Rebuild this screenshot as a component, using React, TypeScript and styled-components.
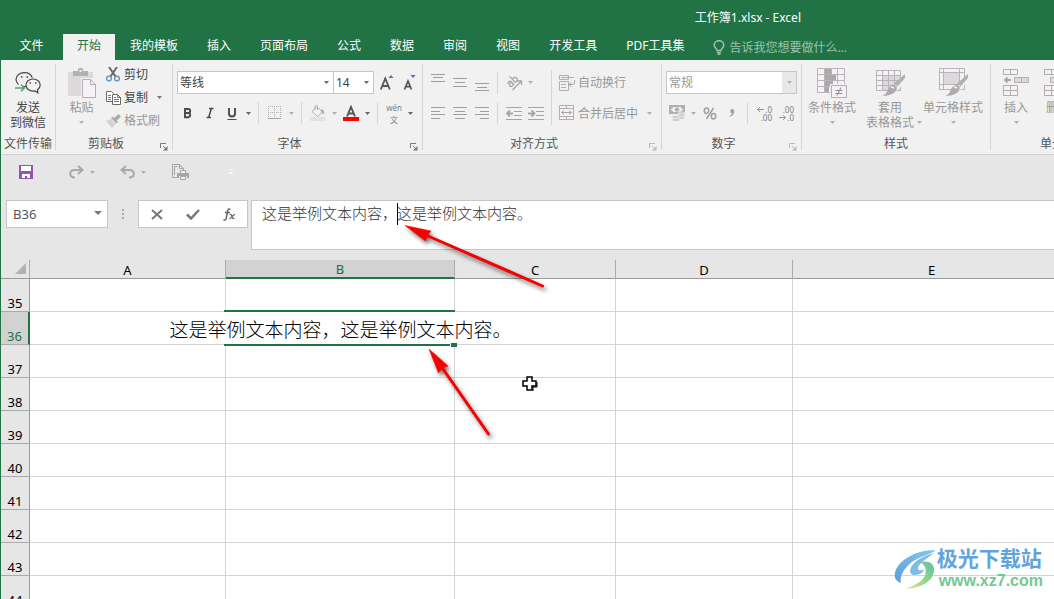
import React from "react";
import styled, { createGlobalStyle, css } from "styled-components";

const green = "#217346";
const dim = "#b1b1b1";
const pale = "#f5f1f5";
const mauve = "#b3adb3";
const shade = "#dcd8dc";
const offText = "#989898";

const GlobalStyle = createGlobalStyle`
  * { box-sizing: border-box; }
  body {
    margin: 0;
    font: 12px/15px "Noto Sans", "Noto Sans CJK SC", sans-serif;
    color: #444;
    background: #e6e6e6;
  }
  button, input, select, textarea {
    font: inherit;
    color: inherit;
    margin: 0;
    padding: 0;
    border: 0;
    background: none;
    outline: none;
  }
  svg { display: block; flex: none; }
`;

const Window = styled.div`
  position: relative;
  display: flex;
  flex-direction: column;
  height: 100vh;
  overflow: hidden;
  border-left: 1px solid ${green};
  background: #e6e6e6;
`;

const TitleBar = styled.header`
  display: flex;
  justify-content: flex-end;
  align-items: center;
  height: 34px;
  flex: none;
  padding-right: 253px;
  background: ${green};
  color: #fff;
  white-space: nowrap;
`;

const TabBar = styled.nav`
  display: flex;
  gap: 1px;
  height: 26px;
  flex: none;
  background: ${green};
`;

const Tab = styled.button<{ $active?: boolean; $wide?: boolean }>`
  flex: none;
  width: ${(p) => (p.$wide ? "61px" : "auto")};
  padding: 0 14px 3px;
  color: ${(p) => (p.$active ? green : "#fff")};
  background: ${(p) => (p.$active ? "#f1f1f1" : "transparent")};
  white-space: nowrap;
`;

const TellMe = styled.label`
  display: flex;
  align-items: center;
  gap: 4px;
  flex: 1;
  padding-left: 14px;
  color: #9cc4ac;
  input { flex: 1; min-width: 0; height: 20px; }
  input::placeholder { color: #9cc4ac; opacity: 1; }
`;

const Ribbon = styled.section`
  display: flex;
  flex: none;
  height: 95px;
  padding: 4px 0;
  overflow: hidden;
  background: #f1f1f1;
  border-bottom: 1px solid #d2d2d2;
`;

const GroupBox = styled.div<{ $w: number }>`
  display: flex;
  flex-direction: column;
  flex: none;
  width: ${(p) => p.$w}px;
  height: 86px;
  border-right: 1px solid #d5d5d5;
`;

const GroupBody = styled.div<{ $pad?: number }>`
  display: flex;
  height: 71px;
  flex: none;
  padding-left: ${(p) => p.$pad ?? 4}px;
`;

const GroupFoot = styled.div`
  display: flex;
  align-items: flex-start;
  padding-top: 1px;
  color: #555;
  span { flex: 1; text-align: center; white-space: nowrap; }
`;

const Launcher = styled.button`
  display: flex;
  width: 16px;
  padding: 7px 4px 0 4px;
`;

const Big = styled.button<{ $w: number; $off?: boolean }>`
  display: flex;
  flex-direction: column;
  align-items: center;
  flex: none;
  width: ${(p) => p.$w}px;
  padding-top: 4px;
  color: ${(p) => (p.$off ? offText : "#444")};
  white-space: nowrap;
`;

const BigIcon = styled.span`
  display: flex;
  align-items: center;
  justify-content: center;
  height: 32px;
  padding-bottom: 2px;
`;

const BigLine = styled.span`
  position: relative;
  display: flex;
  align-items: center;
  justify-content: center;
  height: 15px;
`;

const SideCaret = styled.span`
  position: absolute;
  left: 100%;
  padding-left: 3px;
`;

const Stack = styled.div<{ $tight?: boolean }>`
  display: flex;
  flex-direction: column;
  gap: ${(p) => (p.$tight ? 2 : 8)}px;
  padding-top: ${(p) => (p.$tight ? 0 : 7)}px;
`;

const Row = styled.div<{ $h?: number }>`
  display: flex;
  align-items: center;
  height: ${(p) => p.$h ?? 22}px;
`;

const Tool = styled.button`
  display: flex;
  align-items: center;
  justify-content: center;
  flex: none;
  width: 22px;
  height: 22px;
`;

const CaretTool = styled(Tool)`
  width: 11px;
`;

const TextTool = styled.button<{ $off?: boolean; $w?: number }>`
  display: flex;
  align-items: center;
  gap: 3px;
  width: ${(p) => (p.$w ? p.$w + "px" : "auto")};
  height: 21px;
  padding-left: 3px;
  color: ${(p) => (p.$off ? offText : "#444")};
  white-space: nowrap;
`;

const Rule = styled.span<{ $tall?: boolean }>`
  flex: none;
  width: 1px;
  height: ${(p) => (p.$tall ? "55px" : "22px")};
  margin: ${(p) => (p.$tall ? "6px 4px 0" : "0 5px 0 4px")};
  background: #d5d5d5;
`;

const Combo = styled.label<{ $w: number; $off?: boolean; $join?: boolean }>`
  position: relative;
  flex: none;
  width: ${(p) => p.$w}px;
  height: 23px;
  border: 1px solid #c6c6c6;
  background: #fff;
  color: ${(p) => (p.$off ? "#999" : "#444")};
  ${(p) => p.$join && css`border-right: 0;`}
  select {
    width: 100%;
    height: 21px;
    padding-left: 2px;
    appearance: none;
    opacity: 1;
  }
`;

const ComboArrow = styled.span<{ $off?: boolean }>`
  position: absolute;
  top: 0;
  right: 0;
  display: flex;
  align-items: center;
  justify-content: center;
  width: 14px;
  height: 21px;
  pointer-events: none;
  background: ${(p) => (p.$off ? "#e8e8e8" : "transparent")};
`;

const QuickBar = styled.div`
  display: flex;
  align-items: center;
  flex: none;
  height: 34px;
  padding-left: 14px;
`;

const QuickGap = styled.span<{ $w: number }>`
  width: ${(p) => p.$w}px;
`;

const FormulaRow = styled.div`
  display: flex;
  align-items: flex-start;
  flex: none;
  padding: 11px 0 10px 5px;
`;

const NameBox = styled.div`
  position: relative;
  width: 102px;
  height: 28px;
  border: 1px solid #c6c6c6;
  background: #fff;
  font-size: 13px;
  input { width: 80px; height: 26px; padding-left: 6px; color: #555; }
  button { position: absolute; top: 8px; right: 5px; }
`;

const Grip = styled.span`
  display: flex;
  align-items: center;
  justify-content: center;
  width: 30px;
  height: 28px;
`;

const EntryButtons = styled.div`
  display: flex;
  width: 110px;
  height: 28px;
  margin-right: 3px;
  border: 1px solid #c6c6c6;
  background: #fff;
  button { display: flex; align-items: center; justify-content: center; width: 36px; }
`;

const FormulaBox = styled.div`
  position: relative;
  flex: 1;
  height: 50px;
  border: 1px solid #c6c6c6;
  border-right: 0;
  background: #fff;
  textarea {
    display: block;
    width: 100%;
    height: 48px;
    padding: 1px 10px;
    resize: none;
    font-family: "Noto Sans CJK SC", sans-serif;
    font-size: 15px;
    line-height: 22px;
    font-weight: 300;
    color: #333;
  }
`;

const TextCaret = styled.span`
  position: absolute;
  left: 145px;
  top: 2px;
  width: 1px;
  height: 22px;
  background: #000;
`;

const SheetArea = styled.main`
  flex: 1;
  min-height: 0;
  overflow: hidden;
`;

const Sheet = styled.table`
  width: calc(100% + 17px);
  table-layout: fixed;
  border-collapse: separate;
  border-spacing: 0;
  background: #fff;
  font-size: 13px;
  color: #000;
`;

const ColHead = styled.th<{ $on?: boolean }>`
  height: 19px;
  padding: 2px 0 0;
  line-height: 15px;
  font-weight: 400;
  color: ${(p) => (p.$on ? green : "#000")};
  background: ${(p) => (p.$on ? "#d2d2d2" : "#e6e6e6")};
  border-right: 1px solid #ababab;
  border-bottom: ${(p) => (p.$on ? `2px solid ${green}` : "1px solid #9b9b9b")};
`;

const Corner = styled(ColHead)`
  padding: 0 3px 2px 0;
  svg { margin-left: auto; }
`;

const RowHead = styled.th<{ $on?: boolean }>`
  height: 33px;
  padding: 0;
  vertical-align: bottom;
  font-weight: 400;
  line-height: 15px;
  color: ${(p) => (p.$on ? green : "#000")};
  background: ${(p) => (p.$on ? "#d2d2d2" : "#e6e6e6")};
  border-right: ${(p) => (p.$on ? `2px solid ${green}` : "1px solid #9b9b9b")};
  border-bottom: 1px solid #ababab;
`;

const Cell = styled.td<{ $open?: boolean; $active?: boolean }>`
  position: relative;
  z-index: ${(p) => (p.$active ? 1 : 0)};
  height: 33px;
  padding: 0;
  border-bottom: 1px solid #d4d4d4;
  border-right: ${(p) => (p.$open ? "0" : "1px solid #d4d4d4")};
`;

const CellText = styled.div`
  position: relative;
  display: flex;
  justify-content: center;
  height: 32px;
  font-family: "Noto Sans CJK SC", sans-serif;
  font-size: 19px;
  line-height: 34px;
  font-weight: 300;
  white-space: nowrap;
`;

const Selection = styled.span`
  position: absolute;
  inset: -2px 0 -2px -2px;
  border: solid ${green};
  border-width: 2px 0;
  &::after {
    content: "";
    position: absolute;
    right: -2px;
    bottom: -3px;
    width: 6px;
    height: 4px;
    background: ${green};
    border-left: 1px solid #fff;
  }
`;

const Overlay = styled.svg`
  position: absolute;
  left: 399px;
  top: 220px;
  z-index: 2;
  pointer-events: none;
`;

const Watermark = styled.div`
  position: absolute;
  right: 11px;
  bottom: 8px;
  z-index: 2;
  display: flex;
  align-items: center;
`;

const MarkText = styled.div`
  display: flex;
  flex-direction: column;
  font-family: "Liberation Sans", "Noto Sans CJK SC", sans-serif;
  white-space: nowrap;
`;

const MarkName = styled.span`
  font-size: 21px;
  line-height: 24px;
  font-weight: 700;
  color: #62a3de;
`;

const MarkUrl = styled.span`
  padding-left: 2px;
  font-size: 16px;
  line-height: 20px;
  font-weight: 700;
  color: #72c991;
`;

const Caret = ({ color = dim }: { color?: string }) => (
  <svg width="5" height="3" viewBox="0 0 5 3"><path d="M0 0h5L2.5 3z" fill={color} /></svg>
);

function Group({ label, w, pad, launcher, children }: {
  label: string; w: number; pad?: number; launcher?: string; children: React.ReactNode;
}) {
  return (
    <GroupBox $w={w} role="group" aria-label={label}>
      <GroupBody $pad={pad}>{children}</GroupBody>
      <GroupFoot>
        <span>{label}</span>
        {launcher && (
          <Launcher aria-label={label + "设置"}>
            <svg width="8" height="8" viewBox="0 0 8 8" stroke={launcher} fill="none">
              <path d="M.5 5V.5H6M3 3l3 3" />
              <path d="M7.500 3v4.500H3z" fill={launcher} stroke="none" />
            </svg>
          </Launcher>
        )}
      </GroupFoot>
    </GroupBox>
  );
}

const WeChatIcon = () => (
  <svg width="26" height="24" viewBox="0 0 26 24" fill="none" stroke="#4a4a4a" strokeWidth="1.200">
    <path d="M11 15.500c-1 .1-2.200 0-3-.3M3.500 13.500C1.800 12 1 10.300 1 8.500 1 4.600 4.800 1.600 9.300 1.600c4 0 7.200 2.200 8 5.200" />
    <path d="M18 8c4.200 0 7.200 2.700 7.200 6 0 2-1 3.600-2.700 4.700l.4 3-2.900-1.800c-.6.2-1.300.2-2 .2-4 0-7-2.700-7-6.100S14 8 18 8z" />
    <path d="M6 6h1.600M11.500 6h1.600M14.500 12h1.500M20 12h1.500" strokeWidth="1.700" />
    <path d="M0 17h9M6 13.700L9.400 17 6 20.300" stroke="#4ea56b" strokeWidth="1.400" />
  </svg>
);

const PasteIcon = () => (
  <svg width="30" height="30" viewBox="0 0 30 30">
    <path d="M1 4h25v24H1z" fill={shade} />
    <path d="M6 8V3h5V1.500A1.500 1.500 0 0 1 12.500 0h2A1.500 1.500 0 0 1 16 1.500V3h5v5z" fill={dim} />
    <path d="M12.500 2h2v2h-2z" fill="#f1f1f1" />
    <path d="M14 10h11l5 5.500V30H14z" fill="#f1f1f1" />
    <path d="M15.500 11.500h8l5 5v13h-13z" fill={pale} stroke={mauve} />
    <path d="M23.500 11.500v5h5" fill="none" stroke={mauve} />
  </svg>
);

const CutIcon = () => (
  <svg width="15" height="15" viewBox="0 0 15 15" fill="none">
    <path d="M3 0l6.500 9.500M11 0L4.500 9.500" stroke="#6a6a6a" strokeWidth="2" />
    <circle cx="3" cy="11.500" r="2.400" stroke="#5d8fc4" strokeWidth="1.300" />
    <circle cx="11" cy="11.500" r="2.400" stroke="#5d8fc4" strokeWidth="1.300" />
  </svg>
);

const CopyIcon = () => (
  <svg width="15" height="14" viewBox="0 0 15 14" fill="#fff" stroke="#6a6a6a">
    <path d="M.5.500h5l2 2v8h-7z" />
    <path d="M2 4.500h3M2 6.500h3M2 8.500h3" stroke="#4a80b8" />
    <path d="M6.500 3.500h5l3 3v7h-8z" />
    <path d="M11.500 3.500v3h3" fill="none" />
    <path d="M8 6.500h2M8 8.500h5M8 10.500h5" stroke="#4a80b8" />
  </svg>
);

const BrushIcon = () => (
  <svg width="15" height="14" viewBox="0 0 15 14">
    <path d="M0 7l5-2 5 5-4 4z" fill="#d5d1d5" />
    <path d="M5 4l1.500-1.500L12 8l-1.500 1.500zM8 4l4.500-4L15 2.500 10.500 7z" fill="#ababab" />
  </svg>
);

const GrowFont = ({ small }: { small?: boolean }) => (
  <svg width="16" height="18" viewBox="0 0 16 18">
    {small ? (
      <path d="M2.500 15.500L6 7l3.500 8.500M4 12.700h4" fill="none" stroke="#555" strokeWidth="1.700" />
    ) : (
      <path d="M.8 15.500L5.300 4.500l4.500 11M2.500 12h5.600" fill="none" stroke="#555" strokeWidth="1.800" />
    )}
    <path d={small ? "M8.500 1h5L11 4z" : "M8.500 4h5L11 1z"} fill="#3f78b5" />
  </svg>
);

const Letter = ({ kind }: { kind: "B" | "I" | "U" }) => (
  <svg width="12" height="13" viewBox="0 0 12 13" fill="none" stroke="#4a4a4a">
    {kind === "B" && <path d="M3 2h3.200a2 2 0 0 1 0 4H3zM3 6h3.700a2.200 2.200 0 0 1 0 4.200H3z" strokeWidth="1.900" />}
    {kind === "I" && <path d="M5 1.500h4.500M2.500 10.500H7M7.300 1.500L4.700 10.500" strokeWidth="1.500" />}
    {kind === "U" && <><path d="M3 1v5.500a3 3 0 0 0 6 0V1" strokeWidth="1.900" /><path d="M1.500 12.500h9" /></>}
  </svg>
);

const BordersIcon = () => (
  <svg width="14" height="14" viewBox="0 0 14 14" fill="none" stroke={mauve} strokeDasharray="1 1">
    <path d="M0 .5h13M0 6.500h13M.5 0v12M6.500 0v12M12.500 0v12" />
    <path d="M0 12.500h13" stroke="#a5a5a5" strokeDasharray="none" />
  </svg>
);

const FillIcon = () => (
  <svg width="16" height="16" viewBox="0 0 16 16" fill="none" stroke={mauve}>
    <path d="M2 6.500L7 1.800l5.500 5L7.500 11.500z" fill={pale} />
    <path d="M5 5V1.500a1 1 0 0 1 2.500 0V5" />
    <path d="M11 4.500c3 0 3.500 2 3 5-2-.5-1.500-2-3-2.500z" fill={dim} stroke="none" />
    <path d="M0 12h16v4H0z" fill="#e6e0e6" stroke="none" />
  </svg>
);

const FontColor = () => (
  <svg width="16" height="16" viewBox="0 0 16 16">
    <path d="M4 11.500L8 2l4 9.500M5.300 8.500h5.400" fill="none" stroke="#555" strokeWidth="1.900" />
    <path d="M0 12h16v4H0z" fill="#f00" />
  </svg>
);

const Phonetic = styled.span`
  display: flex;
  flex-direction: column;
  align-items: center;
  gap: 1px;
  font-size: 8px;
  line-height: 11px;
  color: #808080;
`;

const Lines = ({ rows, h = 12 }: { rows: [number, number, number][]; h?: number }) => (
  <svg width="14" height={h} viewBox={`0 0 14 ${h}`} stroke="#9f9f9f">
    {rows.map(([x, w, y]) => <path key={y} d={`M${x} ${y}.5h${w}`} />)}
  </svg>
);

const Orient = () => (
  <svg width="17" height="16" viewBox="0 0 17 16" fill="none" stroke="#a5a5a5" strokeWidth="1.300">
    <g transform="rotate(-45 6 6)">
      <path d="M1 4.500h2.500q1.500 0 1.500 1.500v3.500H2.500a1.500 1.500 0 0 1 0-3H5" />
      <path d="M7.500 1v8.500M7.500 5h2a1.700 1.700 0 0 1 1.700 1.700v1.100A1.700 1.700 0 0 1 9.500 9.500h-2" />
    </g>
    <path d="M6.500 15L15 6.500M11.500 6h4v4" />
  </svg>
);

const Indent = ({ right }: { right?: boolean }) => (
  <svg width="16" height="13" viewBox="0 0 16 13" stroke="#a5a5a5" fill="none">
    <path d="M0 .5h16M8 4.500h8M8 8.500h8M0 12.500h16" />
    <path d={right ? "M0 6.500h6M3.500 3.500l3 3-3 3" : "M7 6.500H1M4 3.500l-3 3 3 3"} strokeWidth="1.800" />
  </svg>
);

const WrapIcon = () => (
  <svg width="16" height="16" viewBox="0 0 16 16" fill="none" stroke={mauve}>
    <path d="M.5.500h9v4h-9zM.5 6.500h9v9h-9zM2 2.500h13M2 9.500h5M2 12.500h5" />
    <path d="M15.500 5v2.500q0 2-2 2H10M12.500 7L10 9.500l2.500 2.500" stroke="#a5a5a5" />
  </svg>
);

const MergeIcon = () => (
  <svg width="16" height="16" viewBox="0 0 16 16" fill={pale} stroke={mauve}>
    <path d="M.5.500h14v14H.5zM.5 3.500h14M.5 11.500h14M7.500.500v3M7.500 11.500v3" />
    <path d="M2.500 7.500h10M5 5.500l-2.500 2 2.500 2M10 5.500l2.500 2-2.500 2" fill="none" stroke="#a5a5a5" />
  </svg>
);

const MoneyIcon = () => (
  <svg width="17" height="16" viewBox="0 0 17 16">
    <path d="M0 0h16v9H0z" fill={dim} />
    <path d="M4 2h8a2 2 0 0 0 2 2v1a2 2 0 0 0-2 2H4a2 2 0 0 0-2-2V4a2 2 0 0 0 2-2z" fill={pale} />
    <circle cx="8" cy="4.500" r="2.200" fill={dim} />
    <path d="M9 7h8v9H4v-5h5z" fill="#f1f1f1" />
    <g fill="#d3ced3">
      <ellipse cx="12.500" cy="7.500" rx="3.500" ry="1.300" /><ellipse cx="12.500" cy="10.300" rx="3.500" ry="1.300" />
      <ellipse cx="6.500" cy="12" rx="3.500" ry="1.200" /><ellipse cx="12.500" cy="13" rx="3" ry="1" /><ellipse cx="7" cy="14.800" rx="3.500" ry="1.200" />
    </g>
  </svg>
);

const PercentIcon = () => (
  <svg width="14" height="13" viewBox="0 0 14 13" fill="none" stroke="#a0a0a0" strokeWidth="1.500">
    <ellipse cx="3.500" cy="3.700" rx="2.200" ry="2.700" /><ellipse cx="10.500" cy="9.300" rx="2.200" ry="2.700" />
    <path d="M10.500 1L3.500 12" />
  </svg>
);

const CommaIcon = () => (
  <svg width="6" height="8" viewBox="0 0 6 8">
    <path d="M3 0a2.200 2.200 0 0 1 2.200 2.400C5.200 5 3.500 7 .8 7.700L.5 7C2 6.300 2.800 5.300 3 4.300A2.200 2.200 0 0 1 3 0z" fill="#a0a0a0" />
  </svg>
);

const DecimalLines = styled.span`
  display: flex;
  flex-direction: column;
  align-items: flex-end;
  width: 16px;
  font-size: 8px;
  line-height: 11px;
  color: #808080;
  span { display: flex; align-items: center; gap: 1px; height: 8px; }
`;

const SmallArrow = ({ right }: { right?: boolean }) => (
  <svg width="7" height="5" viewBox="0 0 7 5" fill="none" stroke="#959595">
    <path d={right ? "M0 2.500h6M4 0l2.500 2.500L4 5" : "M1 2.500h6M3 0L.5 2.500 3 5"} />
  </svg>
);

const BrushOver = () => (
  <>
    <path d="M31 6L20 17l-2 4 3 2 4-3 6-11z" fill="#f1f1f1" />
    <path d="M30 6v4l-7.500 8.500-3.500-3z" fill={dim} />
    <path d="M18 17c1.500-.6 3.600 1 3.800 2.800.2 3.600-4.500 8.200-14.800 8.200 3-1.200 4.500-3 5.500-5.500.9-2.600 3-5 5.500-5.500z" fill="#ababab" />
    <path d="M16 19.500q2-1 3 1" fill="none" stroke="#f1f1f1" strokeWidth="1.500" />
  </>
);

const CondIcon = () => (
  <svg width="30" height="30" viewBox="0 0 30 30">
    <path d="M.5.500h27v24H.5z" fill={pale} />
    <path d="M.5.500h27v24H.5zM7.500.500v24M14.500.500v6M20.500.500v24M.5 6.500h27M.5 12.500h27M.5 18.500h27" fill="none" stroke="#b9b4b9" />
    <path d="M8 1h6v5H8zM8 7h11v5H8zM8 13h8v5H8zM8 19h4v5H8z" fill="#a9a9a9" />
    <path d="M13 16h17v14H13z" fill="#f1f1f1" />
    <path d="M14.500 17.500h15v12h-15z" fill={pale} stroke={mauve} />
    <path d="M18.500 22.500h7M18.500 25.500h7M24 19.500l-4 8" stroke="#8a8a8a" fill="none" />
  </svg>
);

const TableStyleIcon = () => (
  <svg width="30" height="30" viewBox="0 0 30 30">
    <path d="M1.500 2.500h24v20h-24z" fill={pale} />
    <path d="M7 8h18v14H7z" fill={shade} />
    <path d="M1.500 2.500h24v20h-24zM7.500 2.500v20M13.500 2.500v20M19.500 2.500v20M1.500 7.500h24M1.500 12.500h24M1.500 17.500h24" fill="none" stroke="#b9b4b9" />
    <BrushOver />
  </svg>
);

const CellStyleIcon = () => (
  <svg width="30" height="30" viewBox="0 0 30 30">
    <path d="M1.500.500h25v21h-25z" fill={pale} />
    <path d="M6 5h15v11H6z" fill={shade} />
    <path d="M1.500.500h25v21h-25zM5.500.500v21M21.500.500v21M1.500 4.500h25M1.500 16.500h25" fill="none" stroke="#b9b4b9" />
    <BrushOver />
  </svg>
);

const CellsIcon = () => (
  <svg width="28" height="28" viewBox="0 0 28 28" fill={pale} stroke={mauve}>
    <path d="M1.500.500h14v5h-14zM8.500.500v5M1.500 16.500h14v10h-14zM8.500 16.500v10M1.500 21.500h14" />
    <path d="M12.500 8.500h14v5h-14zM19.500 8.500v5" fill={shade} />
    <path d="M9 11H3M5.500 8.500L3 11l2.500 2.500" fill="none" strokeWidth="1.800" stroke="#a9a9a9" />
  </svg>
);

const DeleteCellsIcon = () => (
  <svg width="28" height="28" viewBox="0 0 28 28" fill={pale} stroke={mauve}>
    <path d="M.5.500h14v5H.5zM7.500.500v5M.5 16.500h14v10H.5zM7.500 16.500v10M.5 21.500h14" />
    <path d="M6.500 8.500h8v5h-8z" fill={shade} />
    <path d="M18 8l6 6M24 8l-6 6" fill="none" strokeWidth="1.800" stroke="#a9a9a9" />
  </svg>
);

const SaveIcon = () => (
  <svg width="14" height="14" viewBox="0 0 14 14">
    <path d="M0 0h14v14H0z" fill="#8d58ad" />
    <path d="M2 1h10v5H2zM3 9h8v4H8v-2H6v2H3z" fill="#fff" />
  </svg>
);

const RedoIcon = ({ undo }: { undo?: boolean }) => (
  <svg width="15" height="14" viewBox="0 0 15 14" fill="none" stroke="#a9a9a9" strokeWidth="2">
    <g transform={undo ? "matrix(-1 0 0 1 15 0)" : undefined}>
      <path d="M13 5H5.500C2.500 5 1.200 7 1.200 8.800c0 2.200 2 3.700 4.800 3.700" />
      <path d="M9 1l4.500 4L9 9" />
    </g>
  </svg>
);

const PreviewIcon = () => (
  <svg width="17" height="17" viewBox="0 0 17 17" fill="none" stroke="#a5a5a5">
    <path d="M5 13.500H.5V.500h7l4 4V6M7.500.500v4h4M2.500 11V2.500h3" />
    <path d="M5 9h12v5h-2v-2H7v2H5z" fill="#a5a5a5" stroke="none" />
    <path d="M8.500 6.500h5v3h-5zM8.500 12.500h5v3h-5z" fill="#eee" />
  </svg>
);

const SwooshIcon = () => (
  <svg width="43" height="42" viewBox="0 0 44 42">
    <defs>
      <linearGradient id="skyTone" x1="0" y1="1" x2="1" y2="0">
        <stop offset="0" stopColor="#5a9fdf" /><stop offset="1" stopColor="#86c9ee" />
      </linearGradient>
      <linearGradient id="leafTone" x1="0" y1="1" x2="1" y2="0">
        <stop offset="0" stopColor="#e3e48c" /><stop offset=".5" stopColor="#8fd68a" /><stop offset="1" stopColor="#5fbfa5" />
      </linearGradient>
    </defs>
    <path d="M43 2C26 0 4 11 1 25c-1 5 1 8.500 6 10C5.500 27 12 17 23 11 30 7 37 6 43 2z" fill="url(#skyTone)" />
    <path d="M41 5C28 8 18 15 16.500 22c-.5 4 2.500 5.500 6 5 4-.5 7.500-2 8-6-2.500 2-6.500 2-6-1C25.500 15 33 11 41 5z" fill="#7dbbe8" />
    <path d="M27 14c8-2 14 1 14 8 0 10-12 19-29 19 10-3 18-8 20-14 1.500-5 0-10-5-13z" fill="url(#leafTone)" />
  </svg>
);

const tabs = ["开始", "我的模板", "插入", "页面布局", "公式", "数据", "审阅", "视图", "开发工具", "PDF工具集"];
const columns = ["A", "B", "C", "D", "E"];
const rows = [35, 36, 37, 38, 39, 40, 41, 42, 43, 44];
const sample = "这是举例文本内容，这是举例文本内容。";

export default function App() {
  return (
    <Window>
      <GlobalStyle />
      <TitleBar>工作簿1.xlsx - Excel</TitleBar>
      <TabBar>
        <Tab $wide>文件</Tab>
        {tabs.map((t) => <Tab key={t} $active={t === "开始"}>{t}</Tab>)}
        <TellMe>
          <svg width="12" height="15" viewBox="0 0 12 15" fill="none" stroke="#9cc4ac" strokeWidth="1.500">
            <path d="M4 10.500C4 8.500 1.200 7.800 1.200 5a4.800 4.300 0 0 1 9.600 0c0 2.800-2.800 3.500-2.800 5.500zM4 12.500h4M4.500 14.200h3" />
          </svg>
          <input placeholder="告诉我您想要做什么..." aria-label="告诉我您想要做什么" />
        </TellMe>
      </TabBar>

      <Ribbon>
        <Group label="文件传输" w={55} pad={0}>
          <Big $w={54}>
            <BigIcon><WeChatIcon /></BigIcon>
            <BigLine>发送</BigLine>
            <BigLine>到微信</BigLine>
          </Big>
        </Group>

        <Group label="剪贴板" w={117} launcher="#777">
          <Big $w={43} $off>
            <BigIcon><PasteIcon /></BigIcon>
            <BigLine>粘贴</BigLine>
            <BigLine><Caret /></BigLine>
          </Big>
          <Stack $tight>
            <Row $h={21}><TextTool><CutIcon />剪切</TextTool></Row>
            <Row $h={21}>
              <TextTool $w={51}><CopyIcon />复制</TextTool>
              <CaretTool aria-label="复制选项"><Caret color="#777" /></CaretTool>
            </Row>
            <Row $h={21}><TextTool $off><BrushIcon />格式刷</TextTool></Row>
          </Stack>
        </Group>

        <Group label="字体" w={250} launcher="#777">
          <Stack>
            <Row $h={23}>
              <Combo $w={156} $join>
                <select aria-label="字体"><option>等线</option></select>
                <ComboArrow><Caret color="#666" /></ComboArrow>
              </Combo>
              <Combo $w={41}>
                <select aria-label="字号"><option>14</option></select>
                <ComboArrow><Caret color="#666" /></ComboArrow>
              </Combo>
              <QuickGap $w={3} />
              <Tool aria-label="增大字号"><GrowFont /></Tool>
              <Tool aria-label="减小字号"><GrowFont small /></Tool>
            </Row>
            <Row>
              <Tool aria-label="加粗"><Letter kind="B" /></Tool>
              <Tool aria-label="倾斜"><Letter kind="I" /></Tool>
              <Tool aria-label="下划线"><Letter kind="U" /></Tool>
              <CaretTool aria-label="下划线选项"><Caret color="#666" /></CaretTool>
              <Rule />
              <Tool aria-label="边框"><BordersIcon /></Tool>
              <CaretTool aria-label="边框选项"><Caret /></CaretTool>
              <Rule />
              <Tool aria-label="填充颜色"><FillIcon /></Tool>
              <CaretTool aria-label="填充颜色选项"><Caret /></CaretTool>
              <Tool aria-label="字体颜色"><FontColor /></Tool>
              <CaretTool aria-label="字体颜色选项"><Caret color="#666" /></CaretTool>
              <Rule />
              <Tool aria-label="拼音"><Phonetic><span>wén</span><span>文</span></Phonetic></Tool>
              <CaretTool aria-label="拼音选项"><Caret color="#666" /></CaretTool>
            </Row>
          </Stack>
        </Group>

        <Group label="对齐方式" w={239} launcher="#b9b9b9">
          <Stack>
            <Row $h={23}>
              <Tool aria-label="顶端对齐"><Lines h={18} rows={[[0, 14, 0], [2, 10, 3], [0, 14, 7]]} /></Tool>
              <Tool aria-label="垂直居中"><Lines h={18} rows={[[0, 14, 4], [2, 10, 8], [0, 14, 12]]} /></Tool>
              <Tool aria-label="底端对齐"><Lines h={18} rows={[[0, 14, 9], [2, 10, 13], [0, 14, 16]]} /></Tool>
              <Rule />
              <Tool aria-label="方向"><Orient /></Tool>
              <CaretTool aria-label="方向选项"><Caret /></CaretTool>
            </Row>
            <Row>
              <Tool aria-label="左对齐"><Lines rows={[[0, 14, 0], [0, 9, 4], [0, 14, 7], [0, 9, 11]]} /></Tool>
              <Tool aria-label="居中"><Lines rows={[[0, 14, 0], [2, 10, 4], [0, 14, 7], [2, 10, 11]]} /></Tool>
              <Tool aria-label="右对齐"><Lines rows={[[0, 14, 0], [5, 9, 4], [0, 14, 7], [5, 9, 11]]} /></Tool>
              <Rule />
              <Tool aria-label="减少缩进量"><Indent /></Tool>
              <Tool aria-label="增加缩进量"><Indent right /></Tool>
            </Row>
          </Stack>
          <Rule $tall />
          <Stack>
            <Row $h={23}><TextTool $off><WrapIcon />自动换行</TextTool></Row>
            <Row>
              <TextTool $off $w={88}><MergeIcon />合并后居中</TextTool>
              <CaretTool aria-label="合并选项"><Caret /></CaretTool>
            </Row>
          </Stack>
        </Group>

        <Group label="数字" w={140} launcher="#b9b9b9">
          <Stack>
            <Combo $w={131} $off>
              <select aria-label="数字格式"><option>常规</option></select>
              <ComboArrow $off><Caret /></ComboArrow>
            </Combo>
            <Row>
              <Tool aria-label="会计数字格式"><MoneyIcon /></Tool>
              <CaretTool aria-label="会计数字格式选项"><Caret /></CaretTool>
              <Tool aria-label="百分比样式"><PercentIcon /></Tool>
              <Tool aria-label="千位分隔样式"><CommaIcon /></Tool>
              <Rule />
              <Tool aria-label="增加小数位数">
                <DecimalLines><span><SmallArrow />.0</span><span>.00</span></DecimalLines>
              </Tool>
              <Tool aria-label="减少小数位数">
                <DecimalLines><span>.00</span><span><SmallArrow right />.0</span></DecimalLines>
              </Tool>
            </Row>
          </Stack>
        </Group>

        <Group label="样式" w={189} pad={3}>
          <Big $w={54} $off>
            <BigIcon><CondIcon /></BigIcon>
            <BigLine>条件格式</BigLine>
            <BigLine><Caret /></BigLine>
          </Big>
          <Big $w={62} $off>
            <BigIcon><TableStyleIcon /></BigIcon>
            <BigLine>套用</BigLine>
            <BigLine>表格格式<SideCaret><Caret /></SideCaret></BigLine>
          </Big>
          <Big $w={64} $off>
            <BigIcon><CellStyleIcon /></BigIcon>
            <BigLine>单元格样式</BigLine>
            <BigLine><Caret /></BigLine>
          </Big>
        </Group>

        <Group label="单元格" w={135}>
          {["插入", "删除", "格式"].map((name) => (
            <Big key={name} $w={42} $off>
              <BigIcon>{name === "插入" ? <CellsIcon /> : <DeleteCellsIcon />}</BigIcon>
              <BigLine>{name}</BigLine>
              <BigLine><Caret /></BigLine>
            </Big>
          ))}
        </Group>
      </Ribbon>

      <QuickBar>
        <Tool aria-label="保存"><SaveIcon /></Tool>
        <QuickGap $w={28} />
        <Tool aria-label="恢复"><RedoIcon /></Tool>
        <CaretTool aria-label="恢复选项"><Caret /></CaretTool>
        <QuickGap $w={18} />
        <Tool aria-label="撤消"><RedoIcon undo /></Tool>
        <CaretTool aria-label="撤消选项"><Caret /></CaretTool>
        <QuickGap $w={20} />
        <Tool aria-label="打印预览"><PreviewIcon /></Tool>
        <QuickGap $w={34} />
        <CaretTool aria-label="自定义快速访问工具栏">
          <svg width="6" height="7" viewBox="0 0 6 7"><path d="M0 0h6v1H0zM0 3h6L3 6z" fill="#f4f4f4" /></svg>
        </CaretTool>
      </QuickBar>

      <FormulaRow>
        <NameBox>
          <input aria-label="名称框" defaultValue="B36" />
          <button aria-label="名称列表">
            <svg width="8" height="8" viewBox="0 0 8 8"><path d="M0 2h8L4 6z" fill="#777" /></svg>
          </button>
        </NameBox>
        <Grip>
          <svg width="2" height="10" viewBox="0 0 2 10"><path d="M0 0h2v2H0zM0 4h2v2H0zM0 8h2v2H0z" fill="#aaa" /></svg>
        </Grip>
        <EntryButtons>
          <button aria-label="取消">
            <svg width="12" height="11" viewBox="0 0 12 11" stroke="#777" strokeWidth="2"><path d="M1 1l10 9M11 1L1 10" /></svg>
          </button>
          <button aria-label="输入">
            <svg width="14" height="11" viewBox="0 0 14 11" stroke="#777" strokeWidth="2.500" fill="none"><path d="M1 5.500L5 9.500 13 1" /></svg>
          </button>
          <button aria-label="插入函数">
            <svg width="13" height="13" viewBox="0 0 13 13" stroke="#666" fill="none" strokeWidth="1.500">
              <path d="M7.500 1.300C5.500.300 4.800 1.500 4.500 3.500L3.300 9.800C3 11.700 2 12.500.5 11.800M2 4.500h5" />
              <path d="M6.500 6.500c1.500-.5 2 .3 2.500 2s1 2.500 2.500 2M12 6.300C10 6.500 8.500 10 6.500 10.800" strokeWidth="1.300" />
            </svg>
          </button>
        </EntryButtons>
        <FormulaBox>
          <textarea aria-label="编辑栏" defaultValue={sample} spellCheck={false} />
          <TextCaret />
        </FormulaBox>
      </FormulaRow>

      <SheetArea>
        <Sheet>
          <colgroup>
            <col width="29" /><col width="196" /><col width="229" /><col width="161" /><col width="177" /><col />
          </colgroup>
          <thead>
            <tr>
              <Corner aria-label="全选">
                <svg width="11" height="11" viewBox="0 0 11 11"><path d="M11 0v11H0z" fill="#b2b2b2" /></svg>
              </Corner>
              {columns.map((c) => <ColHead key={c} scope="col" $on={c === "B"}>{c}</ColHead>)}
            </tr>
          </thead>
          <tbody>
            {rows.map((r) => (
              <tr key={r}>
                <RowHead scope="row" $on={r === 36}>{r}</RowHead>
                {columns.map((c) => {
                  const active = r === 36 && c === "B";
                  return (
                    <Cell key={c} $active={active} $open={active || (r === 36 && c === "A")}>
                      {active && <><Selection /><CellText>{sample}</CellText></>}
                    </Cell>
                  );
                })}
              </tr>
            ))}
          </tbody>
        </Sheet>
      </SheetArea>

      <Overlay width="160" height="225" viewBox="400 220 160 225" aria-hidden="true">
        <g style={{ filter: "drop-shadow(2px 3px 2px rgba(0,0,0,.55))" }} fill="#f60000" stroke="#f60000">
          <path d="M428 236L542.500 286" strokeWidth="3" strokeLinecap="round" />
          <path d="M405 225.500L431 231 427.500 235.500 425.500 241z" strokeWidth=".5" />
          <path d="M443 369L488.500 434" strokeWidth="3" strokeLinecap="round" />
          <path d="M429 349L448 366 442.500 368 438.500 373z" strokeWidth=".5" />
        </g>
        <path d="M527 377h5v4h4v5h-4v4h-5v-4h-4v-5h4z" fill="#fff" stroke="#000" strokeWidth="1.500" />
        <path d="M533 391v-4h4v-5" fill="none" stroke="#000" />
      </Overlay>

      <Watermark>
        <SwooshIcon />
        <MarkText>
          <MarkName>极光下载站</MarkName>
          <MarkUrl>www.xz7.com</MarkUrl>
        </MarkText>
      </Watermark>
    </Window>
  );
}
